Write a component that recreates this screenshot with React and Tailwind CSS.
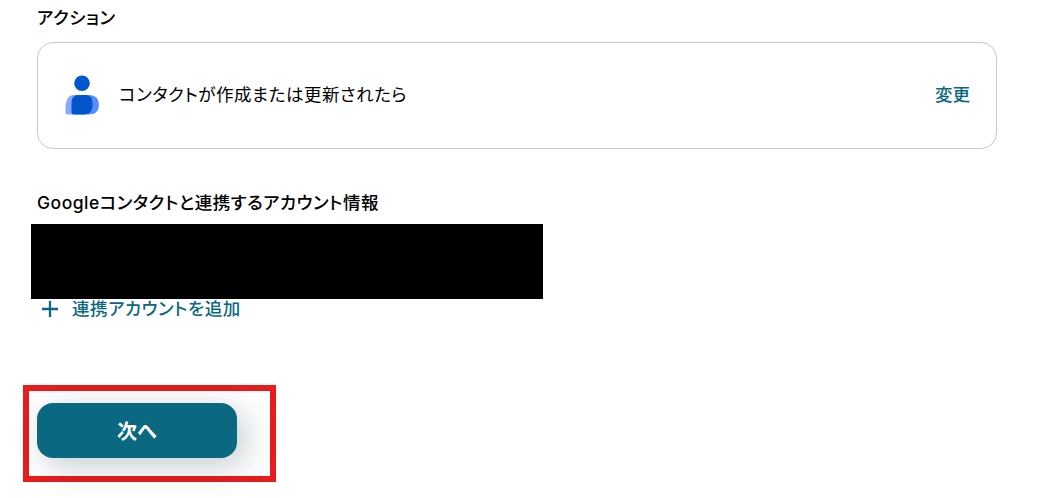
function ContactIcon() {
  return (
    <svg className="h-10 w-[34px] shrink-0" viewBox="0 0 34 40">
      <path d="M9 20h9v19.500H2.500C1 39.500.500 38.500.500 37v-4C.500 26 3 20 9 20z" fill="#86a9ff" />
      <path d="M16 20h8c6 0 9.800 3.500 9.800 9.500v1c0 6-3.800 9-9.800 9h-8z" fill="#578cff" />
      <path d="M13 20h7c5 0 7.500 3 7.500 7.500v3c0 6-3.500 9-9.500 9H9c-2 0-2.500-1-2.500-3V28c0-5 2.500-8 6.500-8z" fill="#0057cc" />
      <circle cx="17" cy="8.300" r="7.800" fill="#0057cc" />
    </svg>
  );
}

function ActionCard() {
  return (
    <div className="mt-3 flex h-[107px] w-[960px] items-center rounded-2xl border border-[#c8c8c8] pr-[26px] pb-0.5 pl-[27px]">
      <ContactIcon />
      <p className="ml-5 flex-1 text-[17.5px] leading-6">コンタクトが作成または更新されたら</p>
      <button className="text-[17.5px] leading-6 font-medium tracking-normal text-[#0b6881]">変更</button>
    </div>
  );
}

export default function App() {
  return (
    <div className="h-[498px] w-[1039px] overflow-hidden bg-white pt-1.5 pl-[37px] font-['Inter','Noto_Sans_CJK_JP',sans-serif] tracking-[0.033em] text-black [font-feature-settings:'palt']">
      <h2 className="text-[17.5px] leading-6 font-medium">アクション</h2>
      <ActionCard />

      <h2 className="mt-[42px] text-[17.5px] leading-6 font-medium tracking-[0.028em]">Googleコンタクトと連携するアカウント情報</h2>
      <div className="mt-[9px] -ml-1.5 h-[75px] w-[512px] bg-black" />
      <button className="ml-[5px] flex h-5 items-center gap-3.5 text-[17.5px] leading-5 font-medium tracking-[0.03em] text-[#0b6881]">
        <svg className="size-4" viewBox="0 0 16 16" stroke="currentColor" strokeWidth="2.3">
          <path d="M8 0v16M0 8h16" />
        </svg>
        連携アカウントを追加
      </button>

      <div className="mt-[66px] -ml-3.5 h-[97px] w-[253px] border-[6px] border-[#e81c1c] pt-3 pl-2">
        <button className="h-[55px] w-[200px] rounded-2xl bg-[#0b6881] pt-0.5 text-xl font-bold tracking-normal text-white shadow-[8px_8px_32px_rgba(11,40,60,0.24)] [font-feature-settings:normal]">
          次へ
        </button>
      </div>
    </div>
  );
}
